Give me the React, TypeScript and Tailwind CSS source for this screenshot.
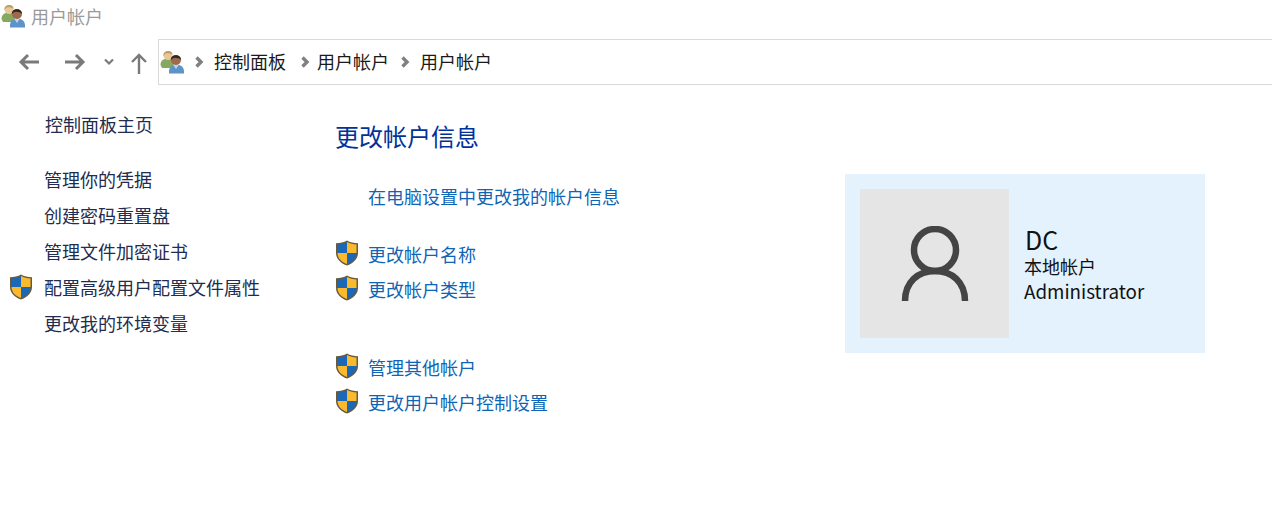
const F = "[font-family:'Noto_Sans_CJK_SC','Noto_Sans',sans-serif]";

function Shield() {
  return (
    <svg width="24" height="26" viewBox="0 0 24 26" className="mb-[2px] shrink-0">
      <path d="M12 0.500 C9 2.500 5 3.200 1 3.200 L1 13 C1 19 6 23.500 12 25.500 C18 23.500 23 19 23 13 L23 3.200 C19 3.200 15 2.500 12 0.500 Z" fill="#6b5a3a" />
      <path d="M12 2 C9 3.600 6 4.400 2.500 4.600 L2.500 13 L12 13 Z" fill="#1b68b8" />
      <path d="M12 2 C15 3.600 18 4.400 21.500 4.600 L21.500 13 L12 13 Z" fill="#fbb92e" />
      <path d="M2.500 13 L12 13 L12 24 C7 22.300 2.500 18.500 2.500 13 Z" fill="#fbb92e" />
      <path d="M21.500 13 L12 13 L12 24 C17 22.300 21.500 18.500 21.500 13 Z" fill="#1b68b8" />
    </svg>
  );
}

function Users() {
  return (
    <svg width="25" height="25" viewBox="0 0 25 25" className="shrink-0">
      <path d="M0.500 16 C0.500 12 3 10.500 5 10 L11 10 C13 11 14 13 14 16 L13 19 L2 19 Z" fill="#86a85f" />
      <circle cx="8" cy="6.500" r="4.500" fill="#e8c898" />
      <path d="M3.500 7 C2.500 1 13 0 12.500 6 C11 4 6 3.500 5 5 Z" fill="#b9a162" />
      <path d="M9 24.500 C8.500 18 12 15.500 16 15.500 C21 15.500 24.500 18 24 24.500 Z" fill="#5e93c8" />
      <path d="M13 15.500 L16 20 L19 15.500 Z" fill="#bcd6ee" />
      <circle cx="16" cy="11" r="5" fill="#a0694a" />
      <path d="M11 11 C10 4.500 21.500 4.500 21 11 C19.500 8.500 14 8 12.500 9.500 Z" fill="#2b2725" />
    </svg>
  );
}

function Chevron() {
  return (
    <svg width="9" height="12" viewBox="0 0 9 12" className="shrink-0">
      <path d="M1.500 1.500 L6 6 L1.500 10.500" fill="none" stroke="#808080" strokeWidth="3.400" />
    </svg>
  );
}

function Arrow({ flip }: { flip?: boolean }) {
  return (
    <svg width="22" height="18" viewBox="0 0 22 18" className={flip ? "shrink-0 rotate-180" : "shrink-0"}>
      <path d="M21 9 L3 9 M10 2 L3 9 L10 16" fill="none" stroke="#7a7a7a" strokeWidth="3" />
    </svg>
  );
}

function Shielded({ text }: { text: string }) {
  return (
    <div className="flex h-[35px] items-center gap-[9px]">
      <Shield />
      <span className="text-[18px] text-[#0f65b5]">{text}</span>
    </div>
  );
}

export default function App() {
  return (
    <div className={`${F} flex h-[531px] w-[1272px] flex-col overflow-hidden bg-white leading-none`}>
      <div className="flex h-[39px] items-center gap-[5px] pl-[1px] pb-[8px]">
        <Users />
        <span className="text-[18px] text-[#9a9a9a]">用户帐户</span>
      </div>
      <div className="flex h-[46px] items-center">
        <div className="flex w-[158px] shrink-0 items-center pl-[18px]">
          <Arrow />
          <div className="w-[24px]" />
          <Arrow flip />
          <svg width="10" height="8" viewBox="0 0 10 8" className="ml-[18px] mt-[-1px] shrink-0">
            <path d="M1 1.500 L5 5.500 L9 1.500" fill="none" stroke="#7a7a7a" strokeWidth="2.200" />
          </svg>
          <svg width="18" height="23" viewBox="0 0 18 23" className="ml-[16px] mt-[3px] shrink-0">
            <path d="M9 22 L9 3 M2 10 L9 3 L16 10" fill="none" stroke="#7a7a7a" strokeWidth="2.400" />
          </svg>
        </div>
        <div className="flex h-full flex-1 items-center border-y border-l border-[#d9d9d9] pl-[1px]">
          <div className="mb-[2px]"><Users /></div>
          <div className="ml-[10px]"><Chevron /></div>
          <span className="mb-[2px] ml-[10px] text-[18px] text-[#1a1a1a]">控制面板</span>
          <div className="ml-[15px]"><Chevron /></div>
          <span className="mb-[2px] ml-[7px] text-[18px] text-[#1a1a1a]">用户帐户</span>
          <div className="ml-[12px]"><Chevron /></div>
          <span className="mb-[2px] ml-[10px] text-[18px] text-[#1a1a1a]">用户帐户</span>
        </div>
      </div>
      <div className="flex flex-1">
        <div className="flex w-[335px] shrink-0 flex-col pl-[9px] pt-[21px] text-[18px] text-[#222c4e]">
          <div className="flex h-[36px] items-center pl-[36px]">控制面板主页</div>
          <div className="h-[19px]" />
          <div className="flex h-[36px] items-center pl-[35px]">管理你的凭据</div>
          <div className="flex h-[36px] items-center pl-[35px]">创建密码重置盘</div>
          <div className="flex h-[36px] items-center pl-[35px]">管理文件加密证书</div>
          <div className="flex h-[36px] items-center gap-[11px]">
            <div className="mt-[2px] flex"><Shield /></div>
            <span>配置高级用户配置文件属性</span>
          </div>
          <div className="flex h-[36px] items-center pl-[35px]">更改我的环境变量</div>
        </div>
        <div className="flex w-[510px] shrink-0 flex-col pt-[39px]">
          <div className="text-[24px] text-[#003399]">更改帐户信息</div>
          <div className="mt-[39px] pl-[33px] text-[18px] text-[#0f65b5]">在电脑设置中更改我的帐户信息</div>
          <div className="mt-[31px]"><Shielded text="更改帐户名称" /><Shielded text="更改帐户类型" /></div>
          <div className="mt-[43px]"><Shielded text="管理其他帐户" /><Shielded text="更改用户帐户控制设置" /></div>
        </div>
        <div className="pt-[89px]">
          <div className="flex h-[179px] w-[360px] items-center bg-[#e3f2fd] pl-[15px]">
            <div className="flex h-[149px] w-[149px] items-center justify-center bg-[#e5e5e5]">
              <svg width="68" height="76" viewBox="0 0 68 76">
                <circle cx="34" cy="24" r="21" fill="none" stroke="#444444" strokeWidth="6.500" />
                <path d="M4 75 C4 56 17 45 34 45 C51 45 64 56 64 75" fill="none" stroke="#444444" strokeWidth="6.500" />
              </svg>
            </div>
            <div className="ml-[15px] mt-[1px] flex flex-col text-[#111111]">
              <span className="ml-[1px] text-[25px] leading-[28px]">DC</span>
              <span className="mt-[1px] text-[18px] leading-[25px]">本地帐户</span>
              <span className="text-[18.800px] leading-[24px]">Administrator</span>
            </div>
          </div>
        </div>
      </div>
    </div>
  );
}
